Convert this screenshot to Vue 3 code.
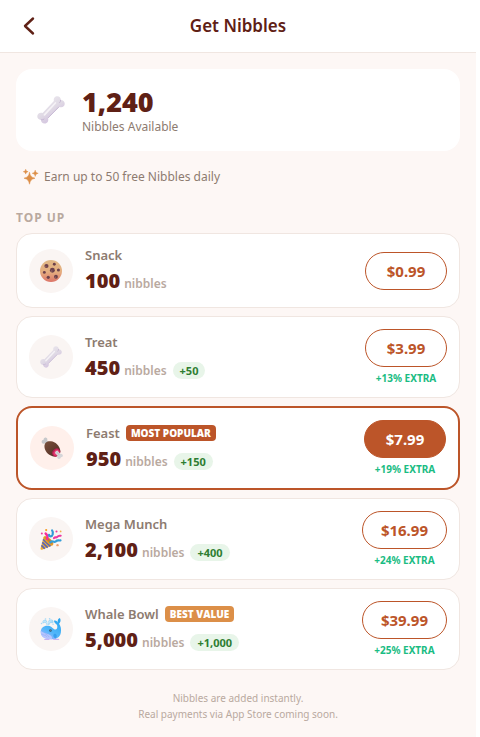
<script setup>
const packs = [
  { name: 'Snack', icon: 'cookie', amount: '100', price: '$0.99' },
  { name: 'Treat', icon: 'bone', amount: '450', bonus: '+50', price: '$3.99', extra: '+13% EXTRA' },
  { name: 'Feast', icon: 'meat', amount: '950', bonus: '+150', price: '$7.99', extra: '+19% EXTRA', tag: 'MOST POPULAR', featured: true },
  { name: 'Mega Munch', icon: 'party', amount: '2,100', bonus: '+400', price: '$16.99', extra: '+24% EXTRA' },
  { name: 'Whale Bowl', icon: 'whale', amount: '5,000', bonus: '+1,000', price: '$39.99', extra: '+25% EXTRA', tag: 'BEST VALUE', gold: true },
]
</script>

<template>
  <div class="page">
    <svg class="sprite" width="0" height="0" aria-hidden="true">
      <defs>
        <linearGradient id="g-bone" x1="0" y1="0" x2="0.7" y2="1">
          <stop offset="0" stop-color="#f1eef2" /><stop offset="0.55" stop-color="#e0dae5" /><stop offset="1" stop-color="#cdb9dc" />
        </linearGradient>
        <linearGradient id="g-cookie" x1="0" y1="0" x2="0" y2="1">
          <stop offset="0" stop-color="#dfb886" /><stop offset="0.55" stop-color="#e5ae80" /><stop offset="1" stop-color="#dc7468" />
        </linearGradient>
        <linearGradient id="g-meat" x1="0" y1="0" x2="1" y2="1">
          <stop offset="0" stop-color="#79503c" /><stop offset="1" stop-color="#4f2b23" />
        </linearGradient>
        <linearGradient id="g-whale" x1="0.7" y1="0" x2="0.2" y2="1">
          <stop offset="0" stop-color="#2aa5ef" /><stop offset="0.6" stop-color="#52b7fa" /><stop offset="1" stop-color="#a9b4ff" />
        </linearGradient>
      </defs>
      <symbol id="i-bone" viewBox="0 0 32 32">
        <path fill="url(#g-bone)" d="M19.3 5.8C18.6 2.6 20.5.4 23.2.4c2.5 0 4 1.8 4 4.2 2.5.1 4.5 1.8 4.5 4.3 0 3.2-3.1 4.8-6.2 3.6L12.6 25.2c1 3.5-.7 6.3-3.8 6.3-2.7 0-4.2-1.8-4.2-4.1-2.5-.1-4.3-1.8-4.3-4.2 0-3.1 3.1-4.9 6.1-3.8Z" />
        <path d="M21 8 8.5 21.5" stroke="#f5f2f6" stroke-width="2" stroke-linecap="round" fill="none" />
        <path d="M24.8 12.7 12.8 25M5 27.3c1.3.1 2.2-.3 3-.9M27 4.8c-.1 1.1-.4 2-1 2.7" stroke="#bcaacb" stroke-width=".8" stroke-linecap="round" fill="none" />
      </symbol>
      <symbol id="i-cookie" viewBox="0 0 32 32">
        <circle cx="16" cy="16" r="16" fill="url(#g-cookie)" />
        <g fill="#6c414b">
          <circle cx="9.4" cy="8.8" r="3" /><circle cx="20.8" cy="6.2" r="2.1" /><circle cx="18" cy="15" r="3.6" />
          <circle cx="26.8" cy="14.6" r="2.2" /><circle cx="6.3" cy="18" r="2.1" /><circle cx="12" cy="25.2" r="2.3" /><circle cx="23.2" cy="24.3" r="2.8" />
        </g>
        <g fill="#9a6766"><circle cx="8.5" cy="9.8" r="1" /><circle cx="17" cy="16" r="1.1" /><circle cx="22.5" cy="25" r=".9" /></g>
      </symbol>
      <symbol id="i-meat" viewBox="0 0 32 32">
        <path fill="#c6c8cb" d="M8.5 11.2 5.4 9.4C2.8 10.5.3 8.8 1 6.2c.4-1.3 1.4-1.900 2.600-1.800C3.700 1.800 5.100.5 7 .8c2 .4 2.800 2.400 2 4.200l2.800 3Z" />
        <path fill="url(#g-meat)" d="M5 13.500C5 8.500 9.200 5.600 14.500 6.300 21 7.100 27 12.600 28 19.300c.9 5.900-4.800 10.800-11.200 8.600C10.100 26 5 20.200 5 13.500Z" />
        <ellipse cx="22.100" cy="22.500" rx="6.300" ry="5.200" transform="rotate(-48 22.1 22.5)" fill="#b51f52" />
        <ellipse cx="22.400" cy="22.800" rx="4.800" ry="3.800" transform="rotate(-48 22.4 22.8)" fill="#e43870" />
        <path fill="#d5d5d8" d="m21.200 21.200 2.500-1.600 4.400 4.700c2.200-.4 4.200 1.300 3.600 3.500-.4 1.300-1.400 1.800-2.800 1.700-.4 2-2.200 2.900-3.900 2-1.700-.8-2-2.600-1-4.100l-3.800-4.100Z" />
        <path d="m23 22 3.500 4" stroke="#b4b1b5" stroke-width="1" />
      </symbol>
      <symbol id="i-party" viewBox="0 0 32 32">
        <path fill="#efad36" d="M5.200 12.800C9 11.500 18.900 20.800 18.700 25L3 31.600c-1.500.5-2.500-.5-2.200-1.800Z" />
        <path d="m4.600 16.400 10.600 10.300M3.400 20.800l7.800 7.600M2.100 25.400l4.800 4.800" stroke="#5a65ba" stroke-width="2.5" />
        <ellipse cx="12.500" cy="18.400" rx="9" ry="3.600" transform="rotate(43 12.5 18.4)" fill="#e29b2c" />
        <ellipse cx="13" cy="18" rx="6.700" ry="1.600" transform="rotate(43 13 18)" fill="#c77a2b" />
        <path d="M10.500 16c1-3 .7-5.600-2.400-8" stroke="#f62c9b" stroke-width="3.400" fill="none" stroke-linecap="round" />
        <path d="M13.200 10c-.4 2.800 4.100 3.400 5.200-.6.5-2.300.4-4.500-.8-6" stroke="#319bd6" stroke-width="3.200" fill="none" stroke-linecap="round" />
        <path d="M15 21c2.500-4.600 4.600 1.300 8-1.600 2.400-2.200 4.400-.9 6.800-1.300" stroke="#349ed8" stroke-width="3.200" fill="none" stroke-linecap="round" />
        <path d="M20.300 14.800c2.100-2.600 3.700.2 5.100-2.100 1.200-1.800 2.600-1.300 4.700-1.500" stroke="#ed38a0" stroke-width="3" fill="none" stroke-linecap="round" />
        <circle cx="9" cy="3" r="1.600" fill="#f59b21" /><circle cx="2.700" cy="8" r="1.500" fill="#ec3ea2" /><circle cx="24" cy="5" r="1.500" fill="#ee3996" />
        <circle cx="30" cy="5" r="1.300" fill="#f1ad43" /><circle cx="25.500" cy="25" r="1.700" fill="#f0a06c" />
      </symbol>
      <symbol id="i-whale" viewBox="0 0 32 32">
        <path fill="url(#g-whale)" d="M1 20.500C1 14 6 10.500 12.300 11.300c4.900.6 6.800 5 9.300 5.500 2.600.6 4-2.200 3.500-5.500-.4-2.800-4.800-3.300-4.700-7.500 3.500-.5 4.900 1 5.400 3.200C25.500 4.500 25.600 1 29 0c1.900 3.300.7 6.300-1.200 8.300 2.400 3.400 3.400 8 2.500 13.100C29 28.400 23.900 31 16.500 31 7.200 31 1 27.600 1 20.500Z" />
        <path fill="#b6c5ff" d="M1.200 19c5 3.800 10.500 3.500 14.400 6.600 2.100 1.700 2.300 3.600 1.700 5.400C8.800 31.300 1.200 28.200 1.200 19Z" />
        <path d="M3 23.500c2.600 1.800 5 1.300 7.500 4M7 22.800c2.600 1.100 4.800 2.200 6.200 5" stroke="#92a9ee" stroke-width=".8" fill="none" />
        <circle cx="15.200" cy="18.200" r="1.800" fill="#31536c" /><circle cx="15.500" cy="17.600" r=".5" fill="#fff" />
        <path fill="#379fee" d="M20.500 23c4-.5 5 3.400 2.500 7-3.200-.8-4.700-4.100-2.500-7Z" />
        <g fill="#a5d9f6">
          <path d="M4.500 3.500C6.500 1.800 9.500 2.800 10.500 5l.8 5.200-2-.4C9 7 7.500 6 5.500 7.500 3.500 8 2.500 5.500 4.500 3.500Z" />
          <path d="M18.500 2.800c-2.500-1.500-5.300-.5-6.500 1.700l-.3 5.500h2c.3-2.500 1.500-3.500 3.500-2.500 2.800.5 3.300-3.200 1.300-4.700Z" />
          <circle cx="8" cy="1.500" r="1.200" /><circle cx="14" cy="1.200" r="1.200" /><circle cx="2.300" cy="8" r="1.200" /><circle cx="19" cy="9" r="1" />
        </g>
        <path d="M5.500 5c2-.8 3.500.2 4.200 2.500m6.600-3.300c-1.500-.2-2.800.5-3.300 2.600" stroke="#def3ff" stroke-width="1" fill="none" stroke-linecap="round" />
        <path d="M7 31h6m7 0h7" stroke="#c6b3f3" stroke-width="2" stroke-linecap="round" />
      </symbol>
    </svg>

    <header class="top">
      <button class="back" type="button" aria-label="Back">
        <svg width="24" height="24" viewBox="0 0 24 24" fill="none" stroke="currentColor" stroke-width="2.4" stroke-linecap="round" stroke-linejoin="round"><path d="m17 4.500-8 7.500 8 7.500" /></svg>
      </button>
      <h1>Get Nibbles</h1>
    </header>

    <main>
      <section class="balance">
        <svg class="big-icon" aria-hidden="true"><use href="#i-bone" /></svg>
        <div>
          <div class="total">1,240</div>
          <div class="caption">Nibbles Available</div>
        </div>
      </section>

      <p class="earn">
        <svg width="16" height="16" viewBox="0 0 16 16" fill="#dc8f48" stroke="#dc8f48" stroke-width=".5" stroke-linejoin="round" aria-hidden="true">
          <path d="M6.500 3.200C7.300 7 8.200 8.200 12 9.200c-3.800 1-4.700 2.200-5.500 6-.8-3.800-1.700-5-5.500-6 3.800-1 4.700-2.200 5.500-6ZM12.200 1.200c.5 2 1 2.600 3 3.100-2 .5-2.500 1.100-3 3.100-.5-2-1-2.600-3-3.100 2-.5 2.500-1.100 3-3.100ZM2.700.3c.4 1.600.8 2 2.400 2.400C3.500 3.100 3.100 3.500 2.700 5.100 2.300 3.500 1.900 3.100.3 2.700 1.900 2.300 2.300 1.900 2.700.3Z" />
        </svg>
        <span>Earn up to 50 free Nibbles daily</span>
      </p>

      <h2>TOP UP</h2>
      <ul class="packs">
        <li v-for="p in packs" :key="p.name" class="pack" :class="{ featured: p.featured }">
          <div class="bubble"><svg aria-hidden="true"><use :href="'#i-' + p.icon" /></svg></div>
          <div class="info">
            <div class="name-row">
              <span class="name">{{ p.name }}</span>
              <span v-if="p.tag" class="tag" :class="{ gold: p.gold }">{{ p.tag }}</span>
            </div>
            <div class="amount-row">
              <span class="amount">{{ p.amount }}</span>
              <span class="unit">nibbles</span>
              <span v-if="p.bonus" class="bonus">{{ p.bonus }}</span>
            </div>
          </div>
          <div class="buy">
            <button class="price" type="button" :aria-label="'Buy ' + p.name + ' for ' + p.price">{{ p.price }}</button>
            <span v-if="p.extra" class="extra">{{ p.extra }}</span>
          </div>
        </li>
      </ul>

      <footer>
        <p>Nibbles are added instantly.</p>
        <p>Real payments via App Store coming soon.</p>
      </footer>
    </main>
  </div>
</template>

<style>
body { background: #fff; }
</style>

<style scoped>
.page {
  min-height: 100vh;
  margin-right: 4px;
  background: #fdf7f5;
  color: #5f2015;
  font-family: "Noto Sans", "Open Sans", sans-serif;
}
.page *, .page { box-sizing: border-box; }
.sprite { display: block; }
h1, h2, p, ul { margin: 0; padding: 0; }
button { font-family: inherit; cursor: pointer; }
.top {
  display: grid;
  grid-template-columns: 24px 1fr 24px;
  align-items: center;
  height: 53px;
  padding: 0 16px;
  background: #fff;
  border-bottom: 1px solid #f0e6e1;
}
.back { display: flex; padding: 0; border: 0; background: none; color: #5f2015; justify-content: center; }
.back svg { flex: none; }
h1 { font-size: 17px; line-height: 24px; font-weight: 600; text-align: center; }
main { padding: 16px; }
.balance {
  display: flex;
  align-items: center;
  gap: 16px;
  min-height: 82px;
  padding: 16px 20px;
  background: #fff;
  border-radius: 16px;
}
.big-icon { width: 30px; height: 30px; padding: 1px; }
.total, .amount, .tag { font-family: "Open Sans", "Noto Sans", sans-serif; font-weight: 800; }
.total { font-size: 27px; line-height: 34px; }
.caption { font-size: 12px; line-height: 16px; color: #8d7b70; }
.earn {
  display: flex;
  align-items: center;
  gap: 5px;
  padding: 17px 7px 24px;
  font-size: 12px;
  line-height: 18px;
  color: #8d7b70;
}
h2 { margin-bottom: 7px; font-size: 12px; line-height: 16px; font-weight: 700; letter-spacing: 1px; color: #b9a99f; }
.packs { display: flex; flex-direction: column; gap: 8px; list-style: none; }
.pack {
  display: flex;
  align-items: center;
  gap: 12px;
  padding: 12px;
  background: #fff;
  border: 1px solid #f0e6e1;
  border-radius: 16px;
}
.pack.featured { border: 2px solid #bc5529; }
.bubble {
  display: grid;
  place-items: center;
  flex: none;
  width: 44px;
  height: 44px;
  border-radius: 50%;
  background: #faf5f3;
}
.bubble svg { width: 22px; height: 22px; }
.featured .bubble { background: #fff0eb; }
.info { flex: 1; display: flex; flex-direction: column; gap: 3px; min-width: 0; }
.name-row { display: flex; align-items: center; gap: 6px; height: 18px; }
.name { font-size: 13px; line-height: 18px; font-weight: 600; color: #8d7b70; }
.tag {
  padding: 0 5px;
  border-radius: 4px;
  background: #bc5529;
  color: #fff;
  font-size: 10px;
  line-height: 16px;
}
.tag.gold { background: #dc8f48; }
.amount-row { display: flex; align-items: baseline; gap: 4px; }
.amount { font-size: 20px; line-height: 28px; }
.unit { font-size: 12px; line-height: 16px; font-weight: 600; color: #b9a99f; }
.bonus {
  margin-left: 2px;
  padding: 0 7px;
  border-radius: 9px;
  background: #e8f5e9;
  color: #2e7d32;
  font-size: 11px;
  line-height: 17px;
  font-weight: 700;
}
.buy { display: flex; flex-direction: column; align-items: center; gap: 4px; }
.price {
  min-width: 82px;
  height: 38px;
  padding: 0 18px;
  border: 1px solid #bc5529;
  border-radius: 20px;
  background: #fff;
  color: #bc5529;
  font-size: 15px;
  line-height: 20px;
  font-weight: 700;
}
.featured .price { background: #bc5529; color: #fff; }
.extra { font-size: 10px; line-height: 14px; font-weight: 700; color: #1abc83; }
footer { padding: 20px 0 0; text-align: center; font-size: 10px; line-height: 16px; color: #b9a99f; }
</style>
